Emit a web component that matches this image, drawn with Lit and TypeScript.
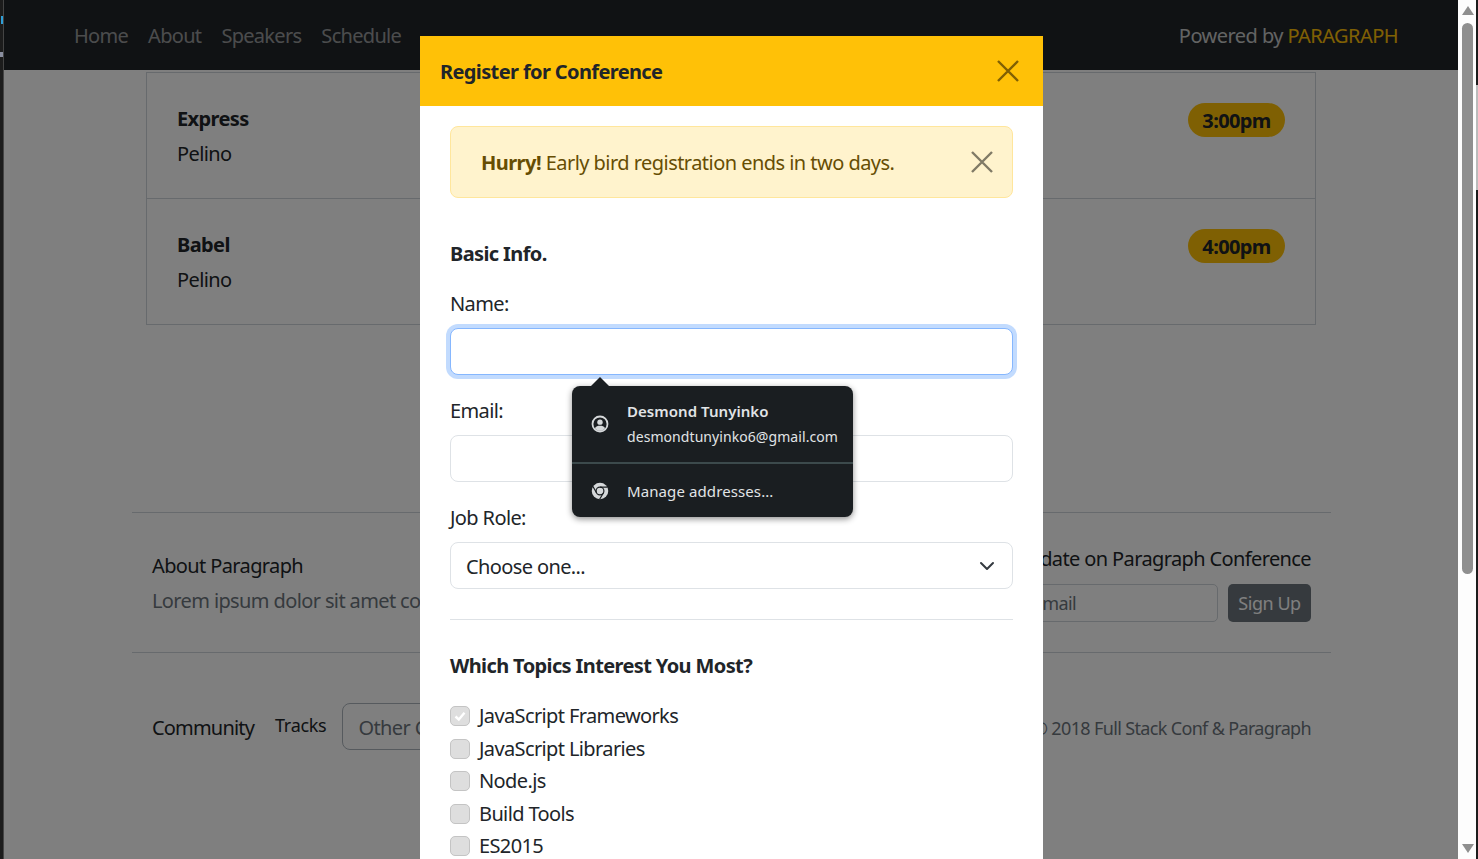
import { LitElement, html, css, svg } from 'lit';
import { customElement } from 'lit/decorators.js';

const closeIcon = svg`<path d="M1 1 L21 21 M21 1 L1 21" fill="none" stroke="currentColor" stroke-width="2.4"/>`;

@customElement('app-root')
export class AppRoot extends LitElement {
  static styles = css`
    :host {
      display: flex;
      height: 859px;
      overflow: hidden;
      font-family: "Noto Sans", "Open Sans", sans-serif;
      font-size: 20px;
      line-height: 30px;
      letter-spacing: -0.62px;
      color: #212529;
      background: #1c1c1c;
    }
    * { box-sizing: border-box; }

    .edge-left {
      width: 4px;
      flex: none;
      position: relative;
      background: #1c1c1c;
      border-right: 1px solid #444;
    }
    .mark-blue {
      position: absolute;
      left: 1px;
      top: 16px;
      width: 2px;
      height: 8px;
      background: #2f9fd8;
    }
    .mark-v {
      position: absolute;
      left: 0;
      top: 52px;
      width: 3px;
      height: 5px;
      background: #8a8fa0;
    }

    .page {
      width: 1454px;
      flex: none;
      position: relative;
      background: #fff;
      overflow: hidden;
    }

    .navbar {
      height: 70px;
      background: #212529;
      display: flex;
      align-items: center;
      justify-content: space-between;
      padding: 2px 60px 0 70px;
    }
    .nav-links { display: flex; gap: 20px; color: rgba(255,255,255,.55); letter-spacing: -0.7px; }
    .powered { color: rgba(255,255,255,.75); letter-spacing: -0.55px; }
    .powered span { color: #ffc107; }

    .container { width: 1200px; margin: 0 auto; }

    .sessions { margin: 2px 15px 0; border: 1px solid #ced4da; }
    .session {
      display: flex;
      justify-content: space-between;
      align-items: flex-start;
      height: 125px;
      padding: 31px 30px 0 30px;
    }
    .session + .session { border-top: 1px solid #ced4da; height: 126px; }
    .session p { margin: 5px 0 0; }
    .session strong { display: block; }
    .badge {
      width: 97px;
      height: 34px;
      margin-top: -1px;
      padding-top: 2px;
      border-radius: 17px;
      background: #ffc107;
      font-weight: 700;
      display: flex;
      align-items: center;
      justify-content: center;
    }

    .footer { margin: 187px 0 0 1px; }
    .footer-row {
      display: flex;
      justify-content: space-between;
      align-items: center;
      padding: 1px 20px 0;
      border-top: 1px solid #ced4da;
    }
    .footer-about { height: 140px; }
    .footer-meta { height: 150px; }
    .muted { color: #6c757d; }
    .footer-row h4 { margin: 0 0 5px; font-size: 20px; font-weight: 400; }
    .signup h4 { text-align: right; margin-bottom: 10px; }
    .signup-form { display: flex; gap: 10px; }
    .signup-form input {
      width: 285px;
      height: 38px;
      border: 1px solid #ced4da;
      border-radius: 5px;
      padding: 0 12px;
      font: inherit;
      font-size: 18px;
      letter-spacing: -0.6px;
    }
    .signup-form input::placeholder { color: #6c757d; }
    .signup-form button {
      width: 83px;
      height: 38px;
      border: 0;
      border-radius: 5px;
      background: #6c757d;
      color: #fff;
      font: inherit;
      font-size: 18px;
      letter-spacing: -0.45px;
    }
    .meta-left { display: flex; align-items: center; letter-spacing: -0.82px; }
    .meta-tracks { font-size: 18px; letter-spacing: -0.3px; margin: -7px 16px 0 21px; }
    .meta-select {
      width: 260px;
      height: 47px;
      margin-bottom: 4px;
      border: 1px solid #adb5bd;
      border-radius: 8px;
      padding: 3px 15px 0;
      display: flex;
      align-items: center;
      color: #6c757d;
      letter-spacing: -0.62px;
    }
    .copyright { font-size: 18px; letter-spacing: -0.65px; color: #6c757d; }

    .backdrop {
      position: absolute;
      inset: 0;
      background: rgba(0,0,0,.5);
    }

    .modal {
      position: absolute;
      left: 416px;
      top: 36px;
      width: 623px;
      height: 823px;
      background: #fff;
      overflow: hidden;
    }
    .modal-head {
      height: 70px;
      background: #ffc107;
      display: flex;
      align-items: center;
      justify-content: space-between;
      padding: 2px 24px 0 20px;
      font-weight: 700;
    }
    .modal-head .close { margin-top: -2px; }
    .close { width: 22px; height: 22px; display: block; }
    .modal-head .close { color: #806004; }
    .modal-body { padding: 20px 30px; }
    .alert {
      height: 72px;
      background: #fff3cd;
      border: 1px solid #ffe69c;
      border-radius: 8px;
      color: #664d03;
      padding: 2px 19px 0 30px;
      display: flex;
      align-items: center;
      justify-content: space-between;
      margin-bottom: 41px;
      letter-spacing: -0.54px;
    }
    .alert .close { color: #807a66; margin-top: -2px; }
    .alert b { font-weight: 700; }
    .section-title { font-weight: 700; margin-bottom: 20px; }
    .field-label { margin-bottom: 9px; }
    .control {
      display: block;
      width: 100%;
      height: 47px;
      border: 1px solid #dee2e6;
      border-radius: 8px;
      background: #fff;
      margin-bottom: 21px;
      font: inherit;
      letter-spacing: inherit;
      color: #212529;
      outline: none;
    }
    .control.focused {
      border-color: #86b7fe;
      box-shadow: 0 0 0 4px rgba(13,110,253,.25);
    }
    .control.select {
      display: flex;
      align-items: center;
      justify-content: space-between;
      padding: 2px 17px 0 15px;
      margin-bottom: 30px;
    }
    .chevron { width: 16px; height: 16px; display: block; margin-top: -2px; }
    hr { border: 0; border-top: 1px solid #dee2e6; margin: 0 0 31px; }
    .checks { display: flex; flex-direction: column; gap: 2.5px; }
    .check { display: flex; align-items: center; gap: 9px; }
    .box {
      width: 20px;
      height: 20px;
      border: 1px solid #c4c4c4;
      border-radius: 5px;
      background: #dedede;
      display: flex;
      align-items: center;
      justify-content: center;
    }
    .box svg { width: 14px; height: 14px; display: block; }

    .autofill {
      position: absolute;
      left: 152px;
      top: 350px;
      width: 281px;
      height: 131px;
      background: #1a1e21;
      border-radius: 8px;
      box-shadow: 0 2px 6px rgba(0,0,0,.45);
      color: #e1e4e6;
      font-size: 14px;
      letter-spacing: 0.07px;
    }
    .arrow {
      position: absolute;
      left: 18px;
      top: -9px;
      width: 0;
      height: 0;
      border-left: 10px solid transparent;
      border-right: 10px solid transparent;
      border-bottom: 10px solid #1a1e21;
    }
    .af-row {
      display: flex;
      align-items: center;
      gap: 18px;
      padding-left: 19px;
    }
    .af-row svg { width: 18px; height: 18px; display: block; flex: none; }
    .af-user { height: 78px; border-bottom: 2px solid #3c4a4c; }
    .af-manage { height: 53px; padding-top: 1px; font-size: 15px; letter-spacing: 0.1px; }
    .af-name { font-size: 15px; font-weight: 600; line-height: 20px; margin-bottom: 6px; letter-spacing: 0.05px; }
    .af-mail { line-height: 20px; }

    .scrollbar {
      width: 18px;
      flex: none;
      background: #fdfdfd;
      position: relative;
    }
    .thumb {
      position: absolute;
      left: 4px;
      top: 23px;
      width: 11px;
      height: 551px;
      border-radius: 6px;
      background: #8f8f8f;
    }
    .arrow-up, .arrow-down {
      position: absolute;
      left: 4px;
      width: 0;
      height: 0;
      border-left: 6px solid transparent;
      border-right: 6px solid transparent;
    }
    .arrow-up { top: 6px; border-bottom: 9px solid #8f8f8f; }
    .arrow-down { bottom: 6px; border-top: 9px solid #8f8f8f; }
    .edge-right { width: 2px; flex: none; background: #1c1c1c; position: relative; }
    .edge-light {
      position: absolute;
      left: 0;
      top: 85px;
      width: 2px;
      height: 105px;
      background: #bbb;
    }
  `;

  sessions = [
    { title: 'Express', speaker: 'Pelino', time: '3:00pm' },
    { title: 'Babel', speaker: 'Pelino', time: '4:00pm' },
  ];

  topics = ['JavaScript Frameworks', 'JavaScript Libraries', 'Node.js', 'Build Tools', 'ES2015'];

  render() {
    return html`
      <div class="edge-left"><div class="mark-blue"></div><div class="mark-v"></div></div>
      <div class="page">
        <div class="navbar">
          <div class="nav-links">
            <span>Home</span><span>About</span><span>Speakers</span><span>Schedule</span>
          </div>
          <div class="powered">Powered by <span>PARAGRAPH</span></div>
        </div>
        <div class="container">
          <div class="sessions">
            ${this.sessions.map(s => html`
              <div class="session">
                <div><strong>${s.title}</strong><p>${s.speaker}</p></div>
                <div class="badge">${s.time}</div>
              </div>`)}
          </div>
          <div class="footer">
            <div class="footer-row footer-about">
              <div>
                <h4>About Paragraph</h4>
                <div class="muted">Lorem ipsum dolor sit amet consectetur</div>
              </div>
              <div class="signup">
                <h4>Stay up to date on Paragraph Conference</h4>
                <div class="signup-form">
                  <input placeholder="Enter your email">
                  <button>Sign Up</button>
                </div>
              </div>
            </div>
            <div class="footer-row footer-meta">
              <div class="meta-left">
                <span>Community</span>
                <span class="meta-tracks">Tracks</span>
                <div class="meta-select">Other Conferences</div>
              </div>
              <div class="copyright">© 2018 Full Stack Conf &amp; Paragraph</div>
            </div>
          </div>
        </div>

        <div class="backdrop"></div>

        <div class="modal">
          <div class="modal-head">
            <span>Register for Conference</span>
            <svg class="close" viewBox="0 0 22 22">${closeIcon}</svg>
          </div>
          <div class="modal-body">
            <div class="alert">
              <span><b>Hurry!</b> Early bird registration ends in two days.</span>
              <svg class="close" viewBox="0 0 22 22">${closeIcon}</svg>
            </div>
            <div class="section-title">Basic Info.</div>
            <div class="field-label">Name:</div>
            <input class="control focused">
            <div class="field-label">Email:</div>
            <input class="control">
            <div class="field-label">Job Role:</div>
            <div class="control select">
              <span>Choose one...</span>
              <svg class="chevron" viewBox="0 0 16 16"><path d="M2 5 L8 11 L14 5" fill="none" stroke="#343a40" stroke-width="2" stroke-linecap="round" stroke-linejoin="round"/></svg>
            </div>
            <hr>
            <div class="section-title">Which Topics Interest You Most?</div>
            <div class="checks">
              ${this.topics.map((t, i) => html`
                <div class="check">
                  <div class="box">
                    ${i === 0 ? html`<svg viewBox="0 0 14 14"><path d="M2.5 7.5 L5.8 10.5 L11.5 3.8" fill="none" stroke="#fff" stroke-width="2.4"/></svg>` : ''}
                  </div>
                  <span>${t}</span>
                </div>`)}
            </div>
          </div>
          <div class="autofill">
            <div class="arrow"></div>
            <div class="af-row af-user">
              <svg viewBox="0 0 24 24">
                <circle cx="12" cy="12" r="10" fill="none" stroke="#d5d8da" stroke-width="2.4"/>
                <circle cx="12" cy="9.5" r="3.6" fill="#d5d8da"/>
                <path d="M5.2 17.6 C6.5 14.9 9 14.4 12 14.4 C15 14.4 17.5 14.9 18.8 17.6 C17.2 19.8 14.8 21 12 21 C9.2 21 6.8 19.8 5.2 17.6 Z" fill="#d5d8da"/>
              </svg>
              <div>
                <div class="af-name">Desmond Tunyinko</div>
                <div class="af-mail">desmondtunyinko6@gmail.com</div>
              </div>
            </div>
            <div class="af-row af-manage">
              <svg viewBox="0 0 24 24">
                <circle cx="12" cy="12" r="11" fill="#d5d8da"/>
                <circle cx="12" cy="12" r="5.2" fill="#d5d8da" stroke="#1a1e21" stroke-width="1.6"/>
                <path d="M12 6.8 H22 M7.5 14.6 L2.6 6 M16.5 14.6 L11.5 23" fill="none" stroke="#1a1e21" stroke-width="1.6"/>
              </svg>
              <div>Manage addresses...</div>
            </div>
          </div>
        </div>
      </div>
      <div class="scrollbar">
        <div class="arrow-up"></div>
        <div class="thumb"></div>
        <div class="arrow-down"></div>
      </div>
      <div class="edge-right"><div class="edge-light"></div></div>
    `;
  }
}
